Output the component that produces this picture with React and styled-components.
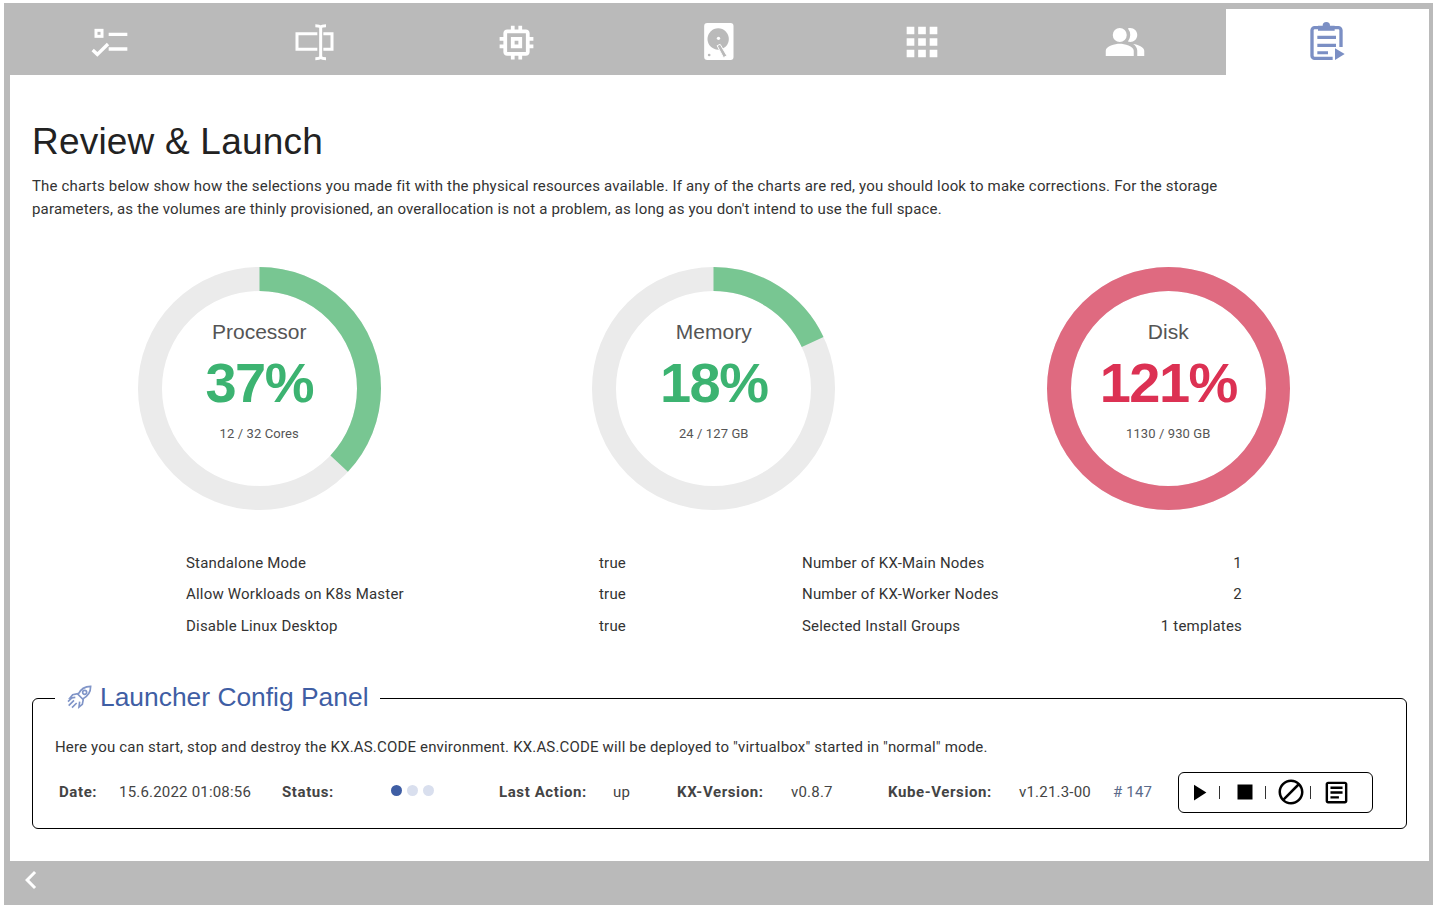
import React from "react";
import styled, { createGlobalStyle } from "styled-components";
import {
  MdApps,
  MdBlock,
  MdChevronLeft,
  MdOutlineArticle,
  MdOutlineMemory,
  MdPeopleAlt,
  MdPlayArrow,
  MdStop,
} from "react-icons/md";

const GlobalStyle = createGlobalStyle`
  html, body {
    margin: 0;
    padding: 0;
    background: #fff;
    font-family: Roboto, "Liberation Sans", sans-serif;
  }
`;

const Frame = styled.div`
  margin: 3px 4px 2px;
  height: 902px;
  background: #bababa;
  padding: 0 4px 0 6px;
  box-sizing: border-box;
  display: flex;
  flex-direction: column;
`;

const TabBar = styled.nav`
  display: grid;
  grid-template-columns: repeat(7, 1fr);
  padding-top: 6px;
  height: 72px;
  box-sizing: border-box;
`;

const Tab = styled.div`
  display: flex;
  align-items: center;
  justify-content: center;
  color: ${(p) => (p.$active ? "#7b8fc4" : "#fff")};
  background: ${(p) => (p.$active ? "#fff" : "transparent")};
`;

const Content = styled.main`
  flex: 1;
  background: #fff;
  padding: 46px 22px 0;
`;

const Title = styled.h1`
  margin: 0 0 12px;
  font-family: "Liberation Sans", Arial, sans-serif;
  font-weight: 400;
  font-size: 37px;
  letter-spacing: 0.2px;
  line-height: 42px;
  color: #222;
`;

const Intro = styled.p`
  margin: 0;
  max-width: 1200px;
  font-size: 15px;
  letter-spacing: 0.17px;
  line-height: 23px;
  color: #333;
`;

const Charts = styled.section`
  display: grid;
  grid-template-columns: repeat(3, 454.5px);
  margin-top: 46px;
`;

const Donut = styled.div`
  justify-self: center;
  display: grid;
  width: 243px;
  height: 243px;
  & > * {
    grid-area: 1 / 1;
  }
`;

const DonutText = styled.div`
  display: flex;
  flex-direction: column;
  align-items: center;
  font-family: "Liberation Sans", Arial, sans-serif;
  color: #555;
`;

const DonutName = styled.div`
  margin-top: 52px;
  font-size: 21px;
  line-height: 26px;
`;

const DonutPercent = styled.div`
  margin-top: 5px;
  font-size: 56px;
  letter-spacing: -1.5px;
  line-height: 66px;
  font-weight: 700;
  color: ${(p) => p.$color};
`;

const DonutSub = styled.div`
  margin-top: 9px;
  font-family: Roboto, sans-serif;
  font-size: 13px;
  letter-spacing: 0.1px;
  line-height: 18px;
`;

const Settings = styled.section`
  display: grid;
  grid-template-columns: 413px 203px 1fr auto;
  grid-auto-rows: 31.5px;
  align-items: center;
  margin: 37px 165px 0 154px;
  font-size: 15px;
  letter-spacing: 0.2px;
  color: #333;
`;

const RightCell = styled.div`
  text-align: right;
`;

const Panel = styled.fieldset`
  margin: 40px 0 0;
  padding: 21px 22px 14px;
  min-width: 0;
  border: 1px solid #000;
  border-radius: 6px;
  box-sizing: border-box;
  width: 1375px;
  height: 147px;
`;

const PanelLegend = styled.legend`
  display: flex;
  align-items: center;
  gap: 6px;
  padding: 0 11px 4px;
  font-family: "Liberation Sans", Arial, sans-serif;
  font-size: 26.4px;
  line-height: 30px;
  color: #3f5ea4;
`;

const PanelText = styled.p`
  margin: 0;
  font-size: 15px;
  letter-spacing: 0.17px;
  line-height: 20px;
  color: #333;
`;

const StatusRow = styled.div`
  display: grid;
  grid-template-columns: 60px 163px 109px 108px 114px 64px 114px 97px 131px 94px 65px 195px;
  align-items: center;
  margin: 15px 0 0 4px;
  height: 41px;
  font-size: 15px;
  letter-spacing: 0.2px;
  color: #444;
`;

const StatusLabel = styled.span`
  font-weight: 700;
  letter-spacing: 0.6px;
`;

const BuildNumber = styled.span`
  color: #5a6a8a;
`;

const Dots = styled.div`
  display: flex;
  gap: 5px;
  margin-top: -3px;
`;

const Dot = styled.span`
  width: 11px;
  height: 11px;
  border-radius: 50%;
  background: ${(p) => (p.$on ? "#3f5ea4" : "#d9dfee")};
`;

const Controls = styled.div`
  display: flex;
  align-items: center;
  height: 41px;
  padding-left: 6px;
  border: 1px solid #000;
  border-radius: 6px;
  box-sizing: border-box;
`;

const ControlButton = styled.button`
  display: flex;
  padding: 0;
  border: 0;
  background: none;
  color: #000;
`;

const Divider = styled.span`
  width: 1px;
  height: 13px;
  margin: 0 ${(p) => p.$after}px 0 ${(p) => p.$before}px;
  background: #333;
`;

const Footer = styled.footer`
  display: flex;
  align-items: center;
  height: 44px;
  padding: 0 0 6px 3px;
  box-sizing: border-box;
  color: #fff;
`;

const ChecklistIcon = () => (
  <svg width="50" height="50" viewBox="0 0 150 150">
    <g transform="translate(-4 -6)" fill="none" stroke="currentColor">
      <rect x="34" y="46" width="18" height="18" strokeWidth="9" />
      <path d="M72 58h56M72 102h56" strokeWidth="10" />
      <path d="M24 105l14 13 32-31" strokeWidth="10" />
    </g>
  </svg>
);

const ResizeIcon = () => (
  <svg width="50" height="50" viewBox="0 0 150 150">
    <g transform="translate(3 -6)" fill="none" stroke="currentColor" strokeWidth="9">
      <path d="M82 56H21v47h61M100 56h26v47h-26" />
      <path d="M92 33v97M76 32c8 0 12 0 16 4 4-4 8-4 16-4M76 131c8 0 12 0 16-4 4 4 8 4 16 4" />
    </g>
  </svg>
);

const DiskIcon = () => (
  <svg width="50" height="50" viewBox="0 0 150 150">
    <g transform="translate(1.5 -6)">
      <rect x="29" y="24" width="88" height="111" rx="9" fill="currentColor" />
      <circle cx="71" cy="72" r="32" fill="#bababa" />
      <circle cx="72" cy="70" r="5" fill="currentColor" />
      <path d="M68 92l9-4 20 34-10 6z" fill="#bababa" stroke="currentColor" strokeWidth="3" />
      <circle cx="44" cy="120" r="4" fill="#bababa" />
    </g>
  </svg>
);

const ReviewIcon = () => (
  <svg width="55" height="50" viewBox="0 0 165 150">
    <g transform="translate(-2 -6)">
      <path
        d="M125 96V46a8 8 0 0 0-8-8H46a8 8 0 0 0-8 8v76a8 8 0 0 0 8 8h54"
        fill="none"
        stroke="currentColor"
        strokeWidth="10"
      />
      <path d="M56 32h14a11 11 0 0 1 22 0h14v15H56z" fill="currentColor" />
      <path d="M54 62h56v10H54zM54 86h56v10H54zM54 109h32v9H54z" fill="currentColor" />
      <path d="M107 100l29 17-29 18z" fill="currentColor" />
    </g>
  </svg>
);

const RocketIcon = () => (
  <svg width="28" height="28" viewBox="0 0 84 84">
    <g fill="none" stroke="#8095c8" strokeWidth="5">
      <path d="M74 10c-16 0-30 8-38 24l14 14c16-8 24-22 24-38z" />
      <circle cx="56" cy="28" r="6" />
      <path d="M36 32l-16 3-8 10 16-2M52 48l-3 16-10 8 2-16" />
      <path d="M24 52L8 68M32 60L18 74M18 44L6 56" />
    </g>
  </svg>
);

const tabs = [
  <ChecklistIcon />,
  <ResizeIcon />,
  <MdOutlineMemory size={45} />,
  <DiskIcon />,
  <MdApps size={46} />,
  <MdPeopleAlt size={42} />,
  <ReviewIcon />,
];

const charts = [
  { name: "Processor", percent: 37, sub: "12 / 32 Cores", arc: "#78c692", text: "#3cb371" },
  { name: "Memory", percent: 18, sub: "24 / 127 GB", arc: "#78c692", text: "#3cb371" },
  { name: "Disk", percent: 121, sub: "1130 / 930 GB", arc: "#df6a80", text: "#dc3153" },
];

const settings = [
  ["Standalone Mode", "true", "Number of KX-Main Nodes", "1"],
  ["Allow Workloads on K8s Master", "true", "Number of KX-Worker Nodes", "2"],
  ["Disable Linux Desktop", "true", "Selected Install Groups", "1 templates"],
];

const ChartCard = ({ name, percent, sub, arc, text }) => {
  const radius = 109.5;
  const length = 2 * Math.PI * radius;
  const filled = (Math.min(percent, 100) / 100) * length;
  return (
    <Donut>
      <svg width="243" height="243" viewBox="0 0 243 243">
        <circle cx="121.5" cy="121.5" r={radius} fill="none" stroke="#ebebeb" strokeWidth="24" />
        <circle
          cx="121.5"
          cy="121.5"
          r={radius}
          fill="none"
          stroke={arc}
          strokeWidth="24"
          strokeDasharray={`${filled} ${length}`}
          transform="rotate(-90 121.5 121.5)"
        />
      </svg>
      <DonutText>
        <DonutName>{name}</DonutName>
        <DonutPercent $color={text}>{percent}%</DonutPercent>
        <DonutSub>{sub}</DonutSub>
      </DonutText>
    </Donut>
  );
};

export default function App() {
  return (
    <>
      <GlobalStyle />
      <Frame>
        <TabBar>
          {tabs.map((icon, i) => (
            <Tab key={i} $active={i === 6}>
              {icon}
            </Tab>
          ))}
        </TabBar>
        <Content>
          <Title>Review &amp; Launch</Title>
          <Intro>
            The charts below show how the selections you made fit with the physical resources
            available. If any of the charts are red, you should look to make corrections. For the
            storage parameters, as the volumes are thinly provisioned, an overallocation is not a
            problem, as long as you don't intend to use the full space.
          </Intro>
          <Charts>
            {charts.map((c) => (
              <ChartCard key={c.name} {...c} />
            ))}
          </Charts>
          <Settings>
            {settings.map((row) => (
              <React.Fragment key={row[0]}>
                <div>{row[0]}</div>
                <div>{row[1]}</div>
                <div>{row[2]}</div>
                <RightCell>{row[3]}</RightCell>
              </React.Fragment>
            ))}
          </Settings>
          <Panel>
            <PanelLegend>
              <RocketIcon />
              Launcher Config Panel
            </PanelLegend>
            <PanelText>
              Here you can start, stop and destroy the KX.AS.CODE environment. KX.AS.CODE will be
              deployed to "virtualbox" started in "normal" mode.
            </PanelText>
            <StatusRow>
              <StatusLabel>Date:</StatusLabel>
              <span>15.6.2022 01:08:56</span>
              <StatusLabel>Status:</StatusLabel>
              <Dots>
                <Dot $on />
                <Dot />
                <Dot />
              </Dots>
              <StatusLabel>Last Action:</StatusLabel>
              <span>up</span>
              <StatusLabel>KX-Version:</StatusLabel>
              <span>v0.8.7</span>
              <StatusLabel>Kube-Version:</StatusLabel>
              <span>v1.21.3-00</span>
              <BuildNumber># 147</BuildNumber>
              <Controls>
                <ControlButton>
                  <MdPlayArrow size={27} />
                </ControlButton>
                <Divider $before={7} $after={9.5} />
                <ControlButton>
                  <MdStop size={30} />
                </ControlButton>
                <Divider $before={5.5} $after={9.5} />
                <ControlButton>
                  <MdBlock size={30} />
                </ControlButton>
                <Divider $before={4.5} $after={10.5} />
                <ControlButton>
                  <MdOutlineArticle size={29} />
                </ControlButton>
              </Controls>
            </StatusRow>
          </Panel>
        </Content>
        <Footer>
          <MdChevronLeft size={36} />
        </Footer>
      </Frame>
    </>
  );
}
